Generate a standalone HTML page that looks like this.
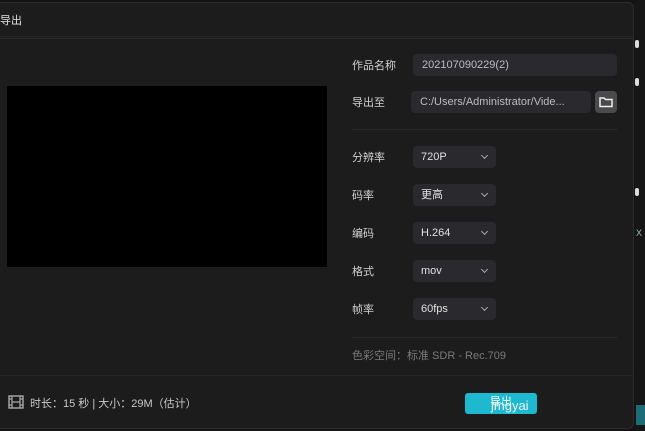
<!DOCTYPE html>
<html><head><meta charset="utf-8"><style>
*{margin:0;padding:0;box-sizing:border-box}
body{width:645px;height:431px;background:#141414;position:relative;overflow:hidden;font-family:"Liberation Sans","Noto Sans CJK SC",sans-serif;color:#d6d6d6;font-size:11px}
.dlg{position:absolute;left:0;top:2px;width:634px;height:427px;background:#1c1c1c;border:1px solid #2c2c2c;border-left:none;border-radius:0 6px 6px 0}
.a{position:absolute}
.lbl{position:absolute;left:352px;font-size:11px;color:#d0d0d0}
.inp{position:absolute;background:#2a2a2e;border-radius:4px;color:#bdbdbd;font-size:11px;padding-left:9px;line-height:22px;height:22px}
.dd{position:absolute;left:413px;width:83px;height:22px;background:#2a2a2e;border-radius:4px;color:#e0e0e0;font-size:11px;line-height:22px;padding-left:8px}
.dd:after{content:"";position:absolute;right:9px;top:7px;width:4px;height:4px;border-right:1.3px solid #aaa;border-bottom:1.3px solid #aaa;transform:rotate(45deg)}
.hr{position:absolute;height:1px;background:#2c2c2c}
</style></head><body>
<div class="dlg"></div>
<div class="a" style="left:0;top:12px;font-size:11px;color:#e0e0e0">导出</div>
<div class="hr" style="left:0;top:36px;width:633px;background:#262626"></div>
<div class="hr" style="left:0;top:38px;width:633px;background:#2a2a2a"></div>
<div class="a" style="left:7px;top:86px;width:320px;height:181px;background:#000"></div>

<div class="lbl" style="top:57px">作品名称</div>
<div class="inp" style="left:413px;top:54px;width:204px;line-height:23px">202107090229(2)</div>
<div class="lbl" style="top:94px">导出至</div>
<div class="inp" style="left:411px;top:91px;width:180px;line-height:23px">C:/Users/Administrator/Vide...</div>
<div class="a" style="left:595px;top:91px;width:22px;height:22px;background:#4a4a4c;border-radius:4px">
<svg width="22" height="22" viewBox="0 0 22 22"><path d="M5 7h4l1.5 1.5H17v7H5z" fill="none" stroke="#eee" stroke-width="1.5"/></svg></div>
<div class="hr" style="left:352px;top:129px;width:265px"></div>

<div class="lbl" style="top:149px">分辨率</div><div class="dd" style="top:146px">720P</div>
<div class="lbl" style="top:187px">码率</div><div class="dd" style="top:184px">更高</div>
<div class="lbl" style="top:225px">编码</div><div class="dd" style="top:222px">H.264</div>
<div class="lbl" style="top:263px">格式</div><div class="dd" style="top:260px">mov</div>
<div class="lbl" style="top:301px">帧率</div><div class="dd" style="top:298px">60fps</div>
<div class="hr" style="left:352px;top:337px;width:265px"></div>
<div class="a" style="left:352px;top:347px;color:#7a7a7a;font-size:11px">色彩空间：标准 SDR - Rec.709</div>
<div class="hr" style="left:0;top:375px;width:633px;background:#262626"></div>

<svg class="a" style="left:8px;top:395px" width="16" height="14" viewBox="0 0 16 14"><rect x="1" y="1" width="14" height="12" fill="none" stroke="#aaa" stroke-width="1.4"/><path d="M4 1v12M12 1v12M4 7h8M1 4h3M1 10h3M12 4h3M12 10h3" stroke="#aaa" stroke-width="1.2"/></svg>
<div class="a" style="left:30px;top:395px;color:#c8c8c8;font-size:11px">时长：15 秒 | 大小：29M（估计）</div>
<div class="a" style="left:465px;top:393px;width:72px;height:21px;background:#1fb9cf;border-radius:3px;color:#fff;font-size:11px;line-height:19px;text-align:center">导出</div>
<div class="a" style="left:491px;top:398px;color:#f0f0f0;font-size:13px">jmgyai</div>

<div class="a" style="left:635px;top:0;width:10px;height:431px;background:#161616"></div>
<div class="a" style="left:635px;top:40px;width:4px;height:8px;background:#ddd;border-radius:2px"></div>
<div class="a" style="left:635px;top:78px;width:4px;height:8px;background:#ddd;border-radius:2px"></div>
<div class="a" style="left:635px;top:188px;width:4px;height:8px;background:#ddd;border-radius:2px"></div>
<div class="a" style="left:636px;top:228px;color:#9bb;font-size:9px">X</div>
<div class="a" style="left:636px;top:405px;width:9px;height:20px;background:#1e6c76"></div>
</body></html>
